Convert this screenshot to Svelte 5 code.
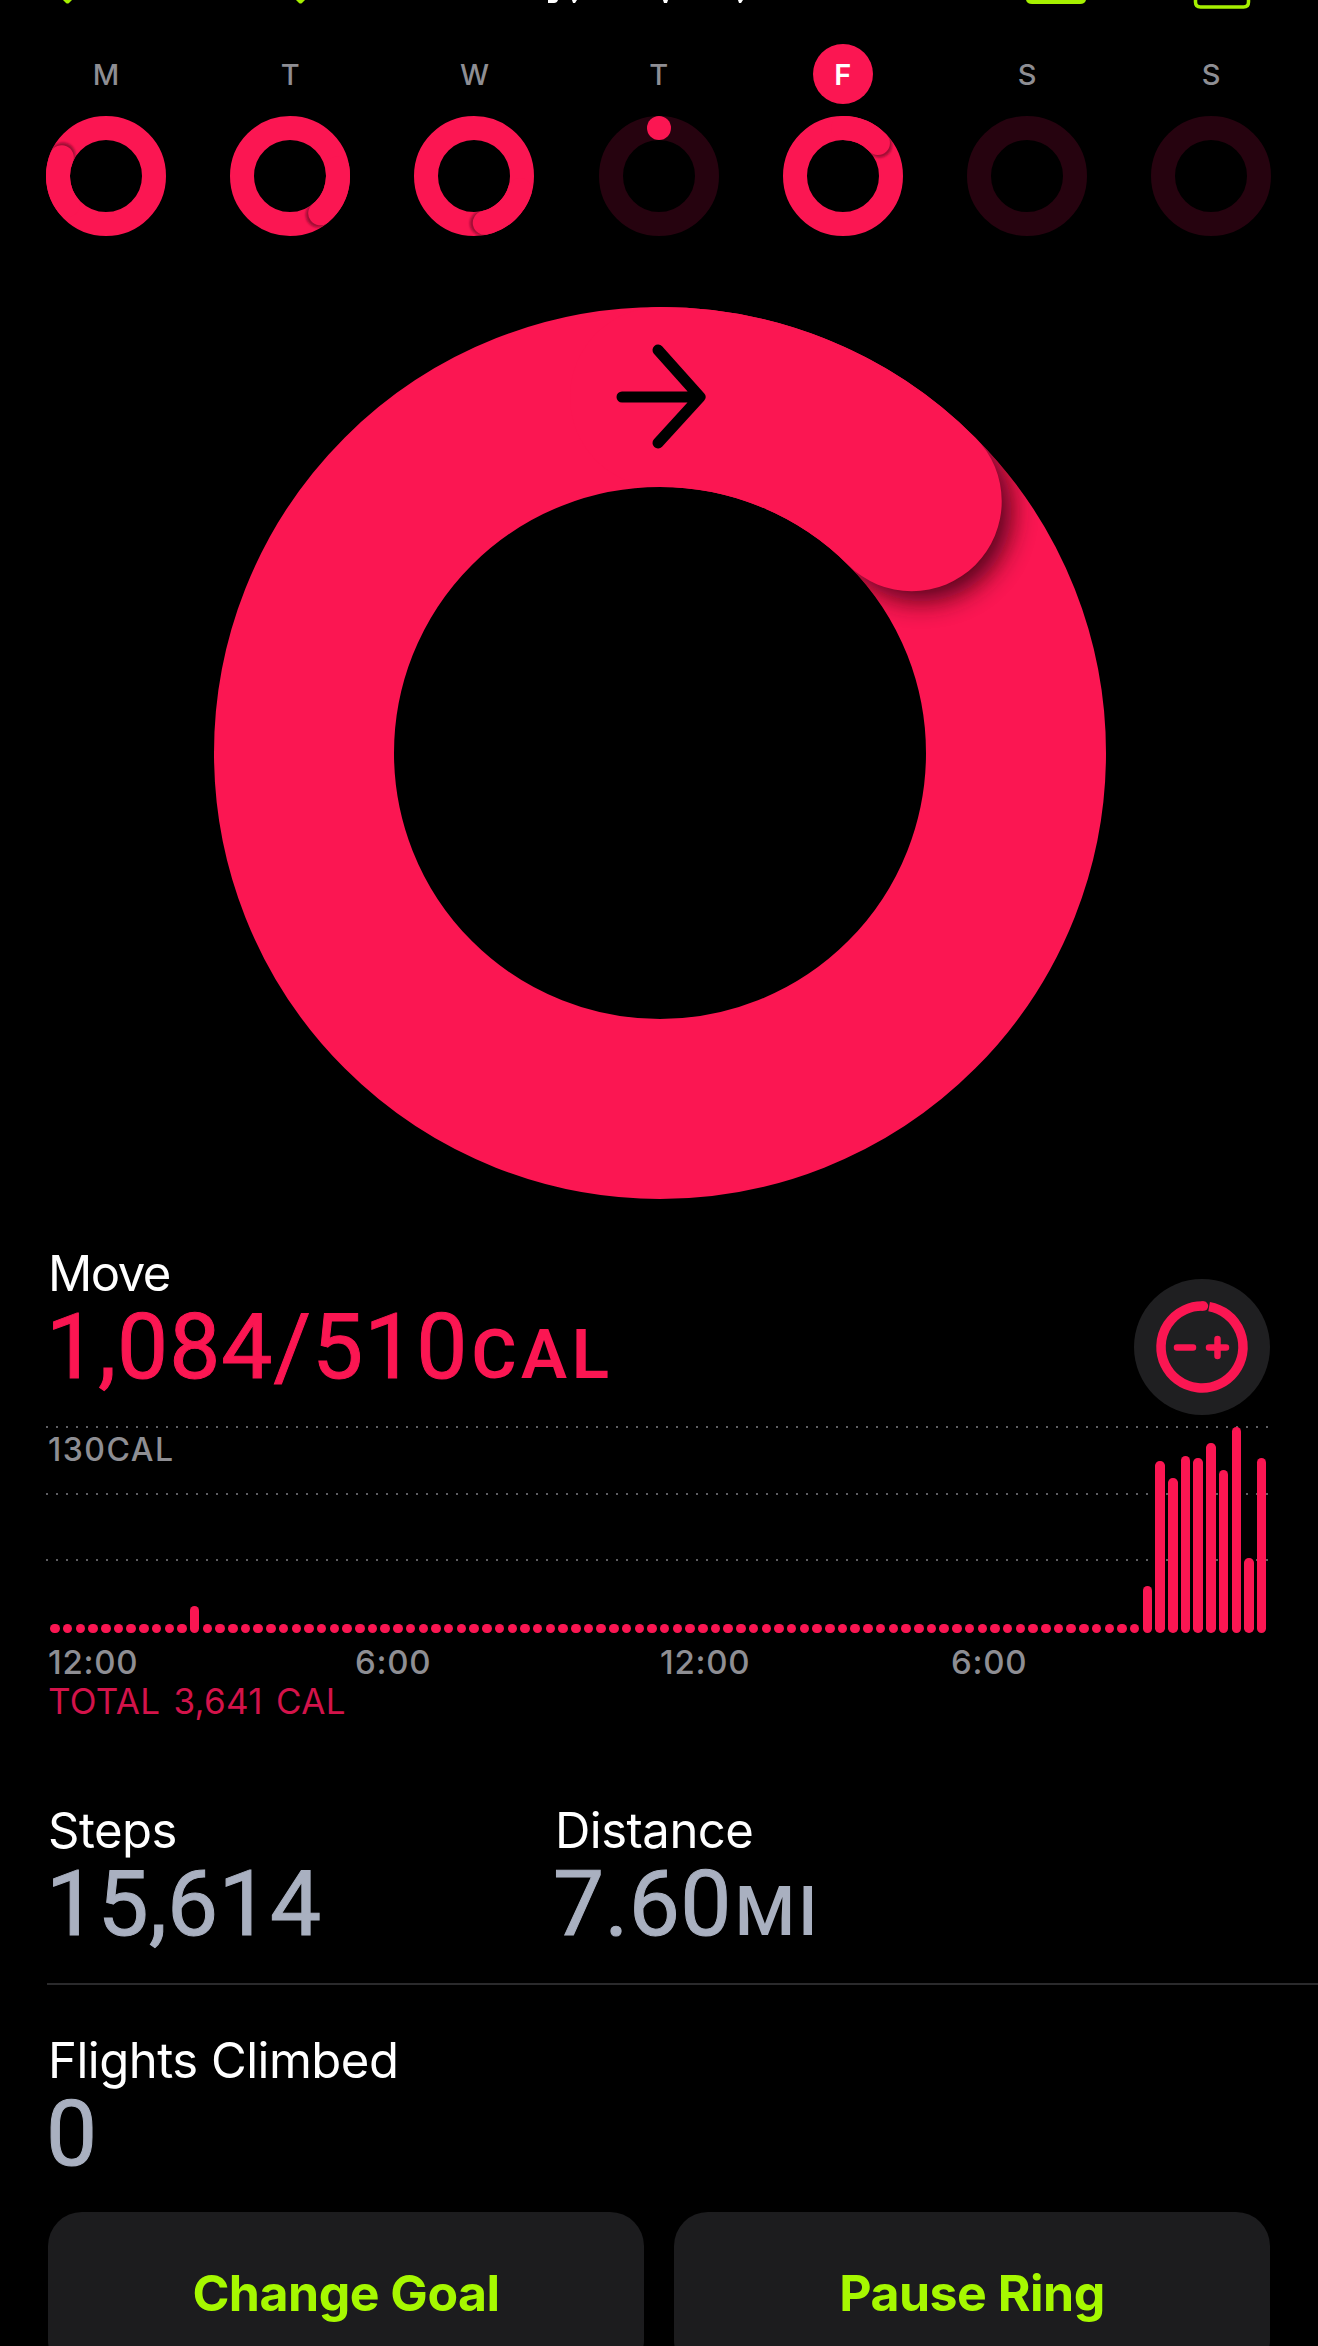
<script>
  const days = [
    { l: 'M', a: 293 },
    { l: 'T', a: 141 },
    { l: 'W', a: 167 },
    { l: 'T', dot: true },
    { l: 'F', a: 46.7, today: true },
    { l: 'S', empty: true },
    { l: 'S', empty: true }
  ];

  function pt(c, r, deg) {
    const t = (deg * Math.PI) / 180;
    return [c + r * Math.sin(t), c - r * Math.cos(t)];
  }
  function arc(c, r, from, to) {
    const [x0, y0] = pt(c, r, from);
    const [x1, y1] = pt(c, r, to);
    const large = to - from > 180 ? 1 : 0;
    return `M${x0} ${y0}A${r} ${r} 0 ${large} 1 ${x1} ${y1}`;
  }
  function annulus(c, ro, ri) {
    return `M${c - ro} ${c}a${ro} ${ro} 0 1 0 ${2 * ro} 0a${ro} ${ro} 0 1 0 ${-2 * ro} 0Z M${c - ri} ${c}a${ri} ${ri} 0 1 0 ${2 * ri} 0a${ri} ${ri} 0 1 0 ${-2 * ri} 0Z`;
  }
  function shadowAt(c, r, deg, off) {
    const [x, y] = pt(c, r, deg + off);
    return { x, y };
  }

  const big = { c: 446, r: 356 };
  const bigShadow = shadowAt(big.c, big.r, 45, 2.2);

  const tall = {
    11: 27,
    86: 47,
    87: 172,
    88: 155,
    89: 177,
    90: 175,
    91: 190,
    92: 163,
    93: 206,
    94: 75,
    95: 175
  };
  const bars = Array.from({ length: 96 }, (_, i) => tall[i] ?? 9);
</script>

<div class="page">
  <svg class="strip" width="1318" height="44" viewBox="0 0 1318 44" aria-hidden="true">
    <path class="lime" d="M63 0h9l-3 3q-1.500 1-3 0Z" />
    <path class="lime" d="M296 0h9l-3 3q-1.500 1-3 0Z" />
    <path class="white" d="M548 0h10q-1 3-4 3h-6Z" />
    <path class="white" d="M572 0h5l-2 3h-2Z" />
    <path class="white" d="M663 0h5l-1 3h-3Z" />
    <path class="white" d="M738 0h5l-2 3h-2Z" />
    <path class="lime" d="M1026 0h60q-1 4-6 4h-48q-5 0-6-4Z" />
    <path class="limeline" d="M1195.500 0v2q0 5 5 5h43q5 0 5-5v-2" />
  </svg>

  <div class="week">
    {#each days as d, i}
      <div class="day">
        <div class="letter" class:today={d.today}>{d.l}</div>
        <svg width="122" height="122" viewBox="0 0 122 122" aria-hidden="true">
          <circle cx="61" cy="61" r="48" class={d.a ? 'stroke-hot' : 'stroke-dim'} stroke-width="24" />
          {#if d.a}
            {@const s = shadowAt(61, 48, d.a, 3)}
            <clipPath id={`band-${i}`}>
              <path d={annulus(61, 60, 36)} clip-rule="evenodd" />
            </clipPath>
            <g clip-path={`url(#band-${i})`}>
              <circle cx={s.x} cy={s.y} r="12.500" class="shade" filter="url(#soft)" />
            </g>
            <path d={arc(61, 48, Math.max(0, d.a - 60), d.a)} class="stroke-hot" stroke-width="24" stroke-linecap="round" />
          {/if}
          {#if d.dot}
            <circle cx="61" cy="13" r="12" class="hot" />
          {/if}
        </svg>
      </div>
    {/each}
  </div>

  <svg class="bigring" width="892" height="892" viewBox="0 0 892 892" aria-hidden="true">
    <defs>
      <filter id="soft" x="-50%" y="-50%" width="200%" height="200%">
        <feGaussianBlur stdDeviation="1" />
      </filter>
      <filter id="softbig" x="-50%" y="-50%" width="200%" height="200%">
        <feGaussianBlur stdDeviation="13" />
      </filter>
      <clipPath id="bigband">
        <path d={annulus(big.c, 446, 266)} clip-rule="evenodd" />
      </clipPath>
    </defs>
    <circle cx={big.c} cy={big.c} r={big.r} class="stroke-hot" stroke-width="180" />
    <g clip-path="url(#bigband)">
      <circle cx={bigShadow.x} cy={bigShadow.y} r="90" class="shade-big" filter="url(#softbig)" />
    </g>
    <path d={arc(big.c, big.r, 0, 45)} class="stroke-hot" stroke-width="180" stroke-linecap="round" />
    <path d="M408 90h76M444 43l42 47l-42 46" class="arrow" />
  </svg>

  <section class="move">
    <div class="label tight">Move</div>
    <div class="value hotText">1,084/510<span class="unit">CAL</span></div>
    <button class="goalbtn" aria-label="Adjust goal">
      <svg width="136" height="136" viewBox="0 0 136 136" aria-hidden="true">
        <path d={arc(68, 41, 10, 362)} class="stroke-hot" stroke-width="9.500" />
        <circle cx={pt(68, 41, 2)[0]} cy={pt(68, 41, 2)[1]} r="4.750" class="hot" />
        <path d="M43 68.500h16M75 68.500h17M83.500 60v17" class="glyph" />
      </svg>
    </button>
  </section>

  <section class="chart">
    <div class="grid">
      <i></i><i></i><i></i>
    </div>
    <div class="ymax">130CAL</div>
    <div class="bars">
      {#each bars as h}
        <span class="bar" style={`height:${h}px`}></span>
      {/each}
    </div>
  </section>

  <div class="times">
    <span>12:00</span><span>6:00</span><span>12:00</span><span>6:00</span>
  </div>
  <div class="total">TOTAL 3,641 CAL</div>

  <section class="stats">
    <div>
      <div class="label">Steps</div>
      <div class="value steel">15,614</div>
    </div>
    <div>
      <div class="label">Distance</div>
      <div class="value steel">7.60<span class="unit">MI</span></div>
    </div>
  </section>

  <hr class="rule" />

  <section class="flights">
    <div class="label">Flights Climbed</div>
    <div class="value steel">0</div>
  </section>

  <div class="actions">
    <button class="action">Change Goal</button>
    <button class="action">Pause Ring</button>
  </div>
</div>

<style>
  :global(body) {
    margin: 0;
    background: #000;
  }
  .page {
    width: 1318px;
    height: 2346px;
    overflow: hidden;
    background: #000;
    color: #fff;
    font-family: Inter, "Liberation Sans", sans-serif;
  }
  .strip {
    display: block;
  }
  .lime {
    fill: #a6f000;
  }
  .white {
    fill: #fff;
  }
  .limeline {
    fill: none;
    stroke: #a6f000;
    stroke-width: 3.500;
  }
  .week {
    display: grid;
    grid-template-columns: repeat(7, 184.200px);
    padding-left: 14px;
  }
  .day {
    display: flex;
    flex-direction: column;
    align-items: center;
  }
  .day svg {
    display: block;
    margin-top: 11px;
  }
  .letter {
    width: 60px;
    height: 60px;
    border-radius: 50%;
    display: flex;
    align-items: center;
    justify-content: center;
    font-size: 29px;
    font-weight: 500;
    color: #8e8e93;
  }
  .letter.today {
    background: #fb1652;
    color: #fff;
    font-weight: 600;
  }
  .hot {
    fill: #fb1652;
  }
  .stroke-hot {
    fill: none;
    stroke: #fb1652;
  }
  .stroke-dim {
    fill: none;
    stroke: #26030f;
  }
  .shade {
    fill: #a00d35;
  }
  .shade-big {
    fill: #2a0010;
    opacity: 0.8;
  }
  .bigring {
    display: block;
    margin: 70px 0 0 214px;
  }
  .arrow {
    fill: none;
    stroke: #000;
    stroke-width: 11;
    stroke-linecap: round;
    stroke-linejoin: round;
  }
  .move {
    position: relative;
    margin-top: 47px;
    padding-left: 48px;
  }
  .label {
    font-size: 49px;
    line-height: 56px;
    height: 56px;
    letter-spacing: -0.500px;
    color: #fff;
  }
  .label.tight {
    letter-spacing: -1.500px;
  }
  .value {
    font-family: Roboto, Inter, sans-serif;
    font-size: 91px;
    line-height: 90px;
    height: 90px;
    font-weight: 400;
    letter-spacing: 1px;
    margin-left: -2px;
    -webkit-text-stroke: 1px currentColor;
  }
  .unit {
    font-size: 69px;
    font-weight: 600;
    letter-spacing: 4.500px;
    margin-left: 3px;
    -webkit-text-stroke: 0;
  }
  .hotText {
    color: #fb1652;
  }
  .steel {
    color: #a9b0c0;
    letter-spacing: 0.300px;
  }
  .steel .unit {
    font-weight: 500;
    letter-spacing: 3px;
  }
  .goalbtn {
    position: absolute;
    left: 1134px;
    top: 33px;
    width: 136px;
    height: 136px;
    padding: 0;
    border: none;
    border-radius: 50%;
    background: #1f1f21;
  }
  .goalbtn svg {
    display: block;
  }
  .glyph {
    fill: none;
    stroke: #fb1652;
    stroke-width: 6.500;
    stroke-linecap: round;
  }
  .chart {
    position: relative;
    margin: 34px 0 0 46px;
    width: 1224px;
    height: 207px;
  }
  .grid {
    position: absolute;
    inset: 0;
    display: flex;
    flex-direction: column;
    gap: 64.500px;
  }
  .grid i {
    display: block;
    height: 2px;
    background: repeating-linear-gradient(90deg, #5f5f63 0 2px, transparent 2px 10px);
  }
  .ymax {
    position: absolute;
    left: 2px;
    top: 6px;
    font-size: 32px;
    line-height: 36px;
    font-weight: 500;
    color: #8e8e93;
    letter-spacing: 1.500px;
  }
  .bars {
    position: absolute;
    inset: 0;
    padding: 0 2.800px 0 4.200px;
    display: flex;
    justify-content: space-between;
    align-items: flex-end;
  }
  .bar {
    display: block;
    width: 9.500px;
    border-radius: 4.750px;
    background: #fb1652;
  }
  .times {
    display: grid;
    grid-template-columns: 307px 305px 291px auto;
    margin: 11px 0 0 48px;
    font-size: 33px;
    line-height: 36px;
    color: #8e8e93;
    font-weight: 500;
    letter-spacing: 0.700px;
  }
  .total {
    margin: 3px 0 0 48px;
    font-size: 35px;
    line-height: 36px;
    color: #d3134a;
    letter-spacing: 0.300px;
    word-spacing: 3px;
  }
  .stats {
    display: grid;
    grid-template-columns: 507px auto;
    margin-top: 84px;
    padding-left: 48px;
  }
  .rule {
    margin: 33.500px 0 0 47px;
    border: none;
    height: 2px;
    background: #2a2a2c;
  }
  .flights {
    margin-top: 48.500px;
    padding-left: 48px;
  }
  .actions {
    display: grid;
    grid-template-columns: 596px 596px;
    gap: 30px;
    margin: 33px 0 0 48px;
  }
  .action {
    height: 162px;
    border: none;
    border-radius: 34px;
    background: #1c1c1e;
    color: #a6f800;
    font-family: Inter, "Liberation Sans", sans-serif;
    font-size: 50px;
    font-weight: 700;
    letter-spacing: -0.500px;
  }
</style>
